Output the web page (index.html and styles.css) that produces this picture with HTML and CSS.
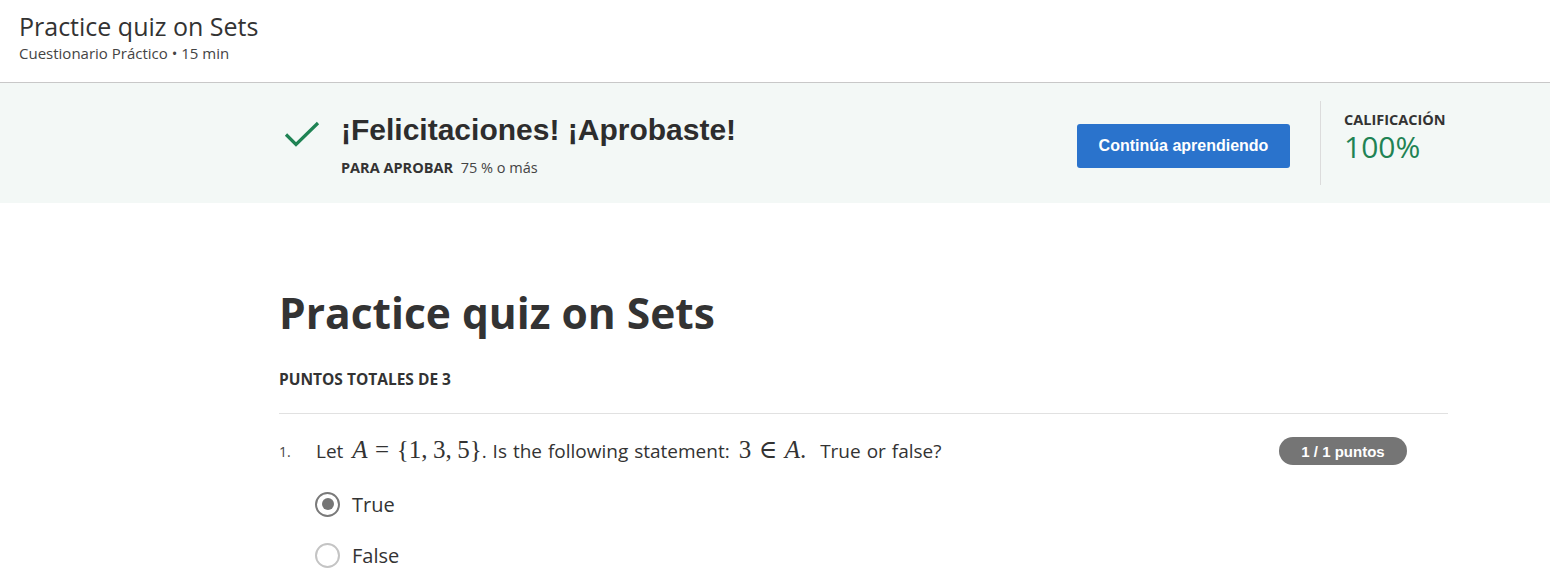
FILE: index.html
```html
<!DOCTYPE html>
<html lang="es">
<head>
<meta charset="utf-8">
<title>Practice quiz on Sets</title>
<link rel="stylesheet" href="styles.css">
</head>
<body>
<header class="top">
  <h1 class="top-title">Practice quiz on Sets</h1>
  <div class="top-sub">Cuestionario Práctico • 15 min</div>
</header>
<section class="banner">
  <div class="banner-inner">
    <div class="result">
      <svg class="check" width="36" height="26" viewBox="0 0 36 26"><path d="M2 13.5 L12 23.5 L34 2" fill="none" stroke="#1f8354" stroke-width="3.2"/></svg>
      <div class="result-text">
        <h2 class="congrats">¡Felicitaciones! ¡Aprobaste!</h2>
        <div class="pass"><span class="pass-label">PARA APROBAR</span> 75 % o más</div>
      </div>
    </div>
    <button class="btn">Continúa aprendiendo</button>
    <div class="grade">
      <div class="grade-label">CALIFICACIÓN</div>
      <div class="grade-value">100%</div>
    </div>
  </div>
</section>
<main class="content">
  <h1 class="quiz-title">Practice quiz on Sets</h1>
  <div class="total">PUNTOS TOTALES DE 3</div>
  <div class="question">
    <div class="q-row">
      <span class="q-num">1.</span>
      <div class="q-text">Let <span class="m"><i>A</i><span class="rel">=</span>{1,<span class="th"></span>3,<span class="th"></span>5}</span>. Is the following statement: <span class="m m-end">3<span class="rel">∈</span><i>A</i>.</span> True or false?</div>
      <span class="badge">1 / 1 puntos</span>
    </div>
    <div class="options">
      <label class="opt"><span class="radio checked"></span>True</label>
      <label class="opt"><span class="radio"></span>False</label>
    </div>
  </div>
</main>
</body>
</html>
```
FILE: styles.css
```css
* { box-sizing: border-box; }
body {
  margin: 0;
  font-family: "Open Sans", "Liberation Sans", sans-serif;
  color: #333;
  background: #fff;
}
.top {
  height: 83px;
  padding: 10px 19px 0;
  border-bottom: 1px solid #c8c8c8;
}
.top-title {
  margin: 0;
  font-size: 25px;
  font-weight: 400;
  line-height: 32px;
  color: #333;
}
.top-sub {
  font-size: 15px;
  line-height: 20px;
  margin-top: 1px;
  color: #444;
}
.banner {
  background: #f3f8f6;
  height: 120px;
}
.banner-inner {
  display: flex;
  align-items: flex-start;
  padding-left: 284px;
  padding-top: 18px;
}
.result {
  display: flex;
  align-items: flex-start;
  flex: 1;
}
.check { margin-top: 20px; flex: none; }
.result-text { margin-left: 21px; }
.congrats {
  margin: 0;
  padding-top: 13px;
  font-family: "Liberation Sans", Arial, sans-serif;
  font-weight: 700;
  font-size: 30px;
  line-height: 32px;
  color: #2d2d2d;
}
.pass {
  margin-top: 13px;
  font-size: 14.5px;
  line-height: 18px;
  color: #444;
}
.pass-label { font-weight: 700; color: #333; margin-right: 4px; }
.btn {
  margin-top: 23px;
  width: 213px;
  height: 44px;
  border: 0;
  border-radius: 3px;
  background: #2a73cc;
  color: #fff;
  font-family: "Liberation Sans", Arial, sans-serif;
  font-weight: 700;
  font-size: 16px;
}
.grade {
  margin-left: 30px;
  border-left: 1px solid #dcdcdc;
  height: 84px;
  width: 230px;
  padding-left: 23px;
  padding-top: 9px;
}
.grade-label {
  font-size: 14.5px;
  font-weight: 700;
  line-height: 20px;
  color: #333;
}
.grade-value {
  font-size: 30px;
  line-height: 34px;
  color: #1f8354;
}
.content {
  margin-left: 279px;
  width: 1169px;
  padding-top: 78px;
}
.quiz-title {
  margin: 0;
  font-size: 42.5px;
  line-height: 64px;
  font-weight: 700;
  color: #333;
}
.total {
  margin-top: 25px;
  font-size: 15.5px;
  font-weight: 700;
  line-height: 18px;
  padding-bottom: 25px;
  border-bottom: 1px solid #e1e1e1;
}
.question { padding-top: 22px; }
.q-row {
  display: flex;
  align-items: center;
  height: 30px;
}
.q-num { width: 37px; font-size: 14px; color: #444; }
.q-text { flex: 1; font-size: 19px; line-height: 30px; color: #333; word-spacing: 1px; }
.m {
  font-family: "Liberation Serif", "DejaVu Serif", serif;
  font-size: 25px;
  line-height: 1;
  margin-left: 3px;
  word-spacing: 0;
}
.m-end { margin-right: 8px; }
.m i { font-style: italic; }
.rel { margin: 0 0.3em; }
.th { display: inline-block; width: 0.22em; }
.badge {
  margin-right: 41px;
  width: 128px;
  height: 28px;
  border-radius: 14px;
  background: #757575;
  color: #fff;
  font-family: "Liberation Sans", Arial, sans-serif;
  font-weight: 700;
  font-size: 15px;
  display: flex;
  align-items: center;
  justify-content: center;
}
.options {
  padding-left: 36px;
  padding-top: 25px;
  display: flex;
  flex-direction: column;
  gap: 25px;
}
.opt {
  display: flex;
  align-items: center;
  font-size: 20px;
  color: #333;
  height: 26px;
}
.radio {
  width: 25px;
  height: 25px;
  border-radius: 50%;
  border: 2px solid #c4c4c4;
  margin-right: 12px;
  position: relative;
}
.radio.checked { border-color: #7a7a7a; border-width: 2.5px; }
.radio.checked::after {
  content: "";
  position: absolute;
  left: 50%; top: 50%;
  width: 12px; height: 12px;
  margin: -6px 0 0 -6px;
  border-radius: 50%;
  background: #757575;
}
```
